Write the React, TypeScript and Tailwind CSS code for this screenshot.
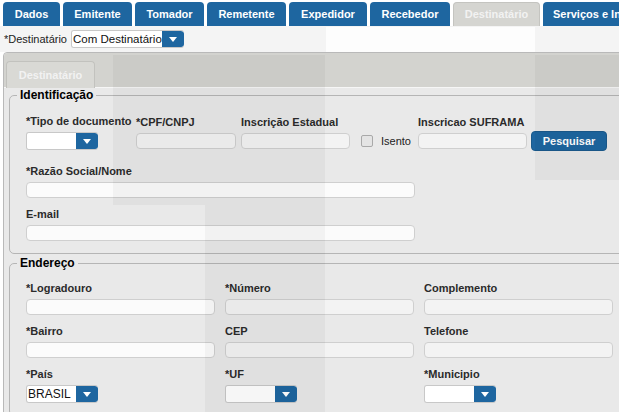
const tabs = [
  { label: "Dados", w: "w-[57px]" },
  { label: "Emitente", w: "w-[69px]" },
  { label: "Tomador", w: "w-[69px]" },
  { label: "Remetente", w: "w-[79px]" },
  { label: "Expedidor", w: "w-[78px]" },
  { label: "Recebedor", w: "w-[80px]" },
  { label: "Destinatário", w: "w-[87px]", active: true },
  { label: "Serviços e Informações", w: "w-[110px]", cut: true },
];

function Caret() {
  return (
    <svg width="8" height="5" viewBox="0 0 8 5">
      <path d="M0 0h8L4 5z" fill="#fff" />
    </svg>
  );
}

function Select({ value, w = "w-[72px]", text = "text-[12px]" }: { value?: string; w?: string; text?: string }) {
  return (
    <div className={`flex h-[18px] ${w} rounded-[3px] overflow-hidden border border-[#c8c8c8] border-r-0`}>
      <div className={`flex-1 bg-white ${text} leading-[16px] text-[#111] pl-[1px] whitespace-nowrap overflow-hidden`}>
        {value}
      </div>
      <div className="w-[22px] bg-[#1e66a0] rounded-r-[3px] flex items-center justify-center">
        <Caret />
      </div>
    </div>
  );
}

function Input({ w, white }: { w: string; white?: boolean }) {
  return (
    <div className={`h-[16px] ${w} rounded-[4px] border border-[#cfcfcf] ${white ? "bg-[#fbfbfb]" : "bg-[#f3f3f3]"}`} />
  );
}

function Label({ children }: { children: React.ReactNode }) {
  return (
    <div className="text-[11px] font-bold text-[#2b2b2b] leading-[13px] mb-[4px] whitespace-nowrap">{children}</div>
  );
}

function Field({ label, children, w }: { label: string; children: React.ReactNode; w?: string }) {
  return (
    <div className={w}>
      <Label>{label}</Label>
      {children}
    </div>
  );
}

export default function App() {
  return (
    <div className="relative w-[619px] h-[412px] overflow-hidden bg-white font-['Liberation_Sans',Arial,sans-serif]">
      {/* Tabs */}
      <div className="flex gap-[3px] pt-[2px] pl-[3px] h-[26px] whitespace-nowrap">
        {tabs.map((t) => (
          <div
            key={t.label}
            className={`${t.w} shrink-0 h-[24px] rounded-t-[4px] flex items-center text-[11px] font-bold ${
              t.active ? "bg-[#d5d5d1] text-[#f2f2f2] border border-b-0 border-[#c4c4c0]" : "bg-[#1e66a0] text-white"
            } ${t.cut ? "justify-start pl-[10px]" : "justify-center"}`}
          >
            {t.label}
          </div>
        ))}
      </div>

      {/* Destinatário select */}
      <div className="flex items-center h-[26px] pl-[4px] gap-[4px] bg-[#f4f4f4]">
        <span className="text-[11px] text-[#222]">*Destinatário</span>
        <Select value="Com Destinatário" w="w-[113px]" text="text-[11.5px]" />
      </div>

      {/* Panel */}
      <div className="ml-[3px] w-[660px] border border-[#b9b9b9] rounded-t-[4px] bg-[#e9e9e9] h-[400px]">
        <div className="h-[35px] bg-[#d3d3cf] pt-[8px] pl-[2px] border-b border-[#f6f6f6] rounded-t-[4px]">
          <div className="w-[89px] h-[27px] rounded-t-[4px] bg-[#d9d9d5] border border-b-0 border-[#c2c2be] flex items-center justify-center text-[11px] font-bold text-[#f2f2f2]">
            Destinatário
          </div>
        </div>

        <fieldset className="ml-[5px] border border-[#b5b5b5] rounded-[5px] pl-[16px] pb-[12px] pt-[13px]">
          <legend className="-ml-[9px] px-[3px] text-[12px] font-bold text-black leading-[14px]">Identificação</legend>
          <div className="flex items-end">
            <Field label="*Tipo de documento" w="w-[110px]">
              <Select />
            </Field>
            <Field label="*CPF/CNPJ" w="w-[105px] mb-[1px]">
              <Input w="w-[100px]" />
            </Field>
            <Field label="Inscrição Estadual" w="w-[120px] mb-[1px]">
              <Input w="w-[109px]" />
            </Field>
            <div className="flex items-center h-[18px] w-[57px]">
              <div className="w-[12px] h-[12px] border border-[#a9a9a9] rounded-[2px] bg-[#e4e4e4]" />
              <span className="ml-[8px] text-[11px] text-[#222]">Isento</span>
            </div>
            <Field label="Inscricao SUFRAMA" w="w-[113px] mb-[1px]">
              <Input w="w-[109px]" />
            </Field>
            <div className="w-[76px] h-[20px] mb-[-1px] rounded-[4px] bg-[#1e66a0] border border-[#1a5a8c] text-white text-[11px] font-bold flex items-center justify-center">
              Pesquisar
            </div>
          </div>
          <div className="mt-[15px]">
            <Field label="*Razão Social/Nome">
              <Input w="w-[389px]" white />
            </Field>
          </div>
          <div className="mt-[10px]">
            <Field label="E-mail">
              <Input w="w-[389px]" white />
            </Field>
          </div>
        </fieldset>

        <fieldset className="ml-[5px] mt-[2px] border border-[#b5b5b5] rounded-[5px] pl-[16px] pt-[12px] pb-[12px]">
          <legend className="-ml-[9px] px-[3px] text-[12px] font-bold text-black leading-[14px]">Endereço</legend>
          <div className="grid grid-cols-[199px_199px_199px] gap-y-[10px]">
            <Field label="*Logradouro">
              <Input w="w-[189px]" white />
            </Field>
            <Field label="*Número">
              <Input w="w-[189px]" />
            </Field>
            <Field label="Complemento">
              <Input w="w-[189px]" />
            </Field>
            <Field label="*Bairro">
              <Input w="w-[189px]" white />
            </Field>
            <Field label="CEP">
              <Input w="w-[189px]" />
            </Field>
            <Field label="Telefone">
              <Input w="w-[189px]" />
            </Field>
            <Field label="*País">
              <Select value="BRASIL" />
            </Field>
            <Field label="*UF">
              <Select />
            </Field>
            <Field label="*Municipio">
              <Select />
            </Field>
          </div>
        </fieldset>
      </div>

      {/* shading bands seen in the capture */}
      <div className="pointer-events-none absolute left-[113px] top-[55px] w-[92px] h-[150px] bg-black/[0.035]" />
      <div className="pointer-events-none absolute left-[205px] top-[55px] w-[120px] h-[357px] bg-black/[0.035]" />
      <div className="pointer-events-none absolute left-[535px] top-[55px] w-[84px] h-[125px] bg-black/[0.035]" />
      <div className="pointer-events-none absolute left-[326px] top-[27px] w-[209px] h-[25px] bg-white/80" />
    </div>
  );
}
